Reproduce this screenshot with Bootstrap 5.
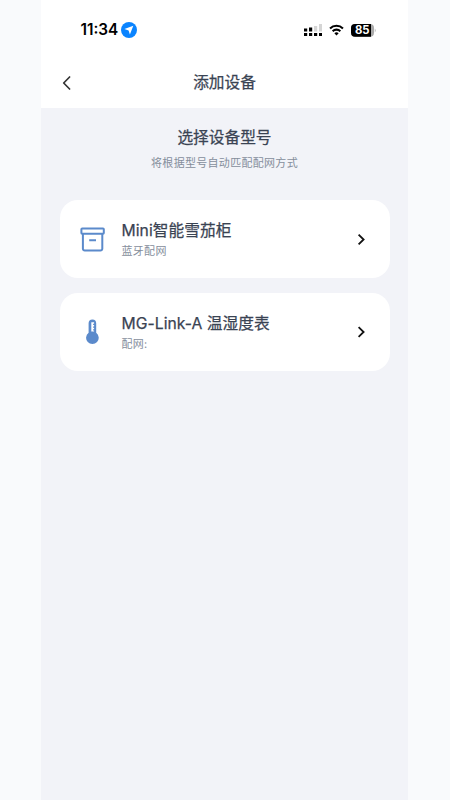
<!DOCTYPE html>
<html lang="zh-CN">
<head>
<meta charset="utf-8">
<meta name="viewport" content="width=device-width, initial-scale=1">
<title>添加设备</title>
<link href="https://cdn.jsdelivr.net/npm/bootstrap@5.3.0/dist/css/bootstrap.min.css" rel="stylesheet">
<style>
body { background: #f9fafc; font-family: Inter, "Noto Sans CJK SC", sans-serif; color: #3a4353; }
.phone { width: 367px; height: 800px; margin-left: 41px; background: #f2f3f8; }
.status { height: 60px; padding: 0 32px 0 39.5px; color: #000; }
.clock { font-size: 15.3px; font-weight: 600; line-height: 20px; }
.status-icons { gap: 7px; }
.titlebar { height: 48px; padding: 0 20px; }
.page-title, .intro h2, .device-name { font-size: 15.7px; font-weight: 400; line-height: 24px; -webkit-text-stroke: .25px currentColor; }
.page-title { margin: -2px 0 0; }
.back { margin-top: -3px; }
.side { width: 10px; }
.intro { padding-top: 18px; height: 92px; }
.intro h2 { margin: 0 0 4px; }
.muted { color: #858e9c; font-size: 11px; line-height: 18px; letter-spacing: .3px; }
.devices { padding: 0 18px 0 18.5px; gap: 15px; }
.device { height: 78px; border-radius: 18px; padding: 0 21px 0 19px; color: inherit; }
.device-name { line-height: 22px; letter-spacing: .05px; padding-top: 2px; }
.device .icon { width: 26px; margin-right: 17px; }
</style>
</head>
<body>
<main class="phone d-flex flex-column">
  <header class="bg-white">
    <div class="status d-flex align-items-center justify-content-between">
      <div class="d-flex align-items-center">
        <span class="clock">11:34</span>
        <svg style="margin-left:3px" width="16" height="16" viewBox="0 0 16 16"><circle cx="8" cy="8" r="8" fill="#0a84ff"/><path d="M12.3 3.7 8.9 12.6 7.6 8.4 3.4 7.1Z" fill="#fff"/></svg>
      </div>
      <div class="status-icons d-flex align-items-center">
        <svg width="18.5" height="12" viewBox="0 0 18.5 12">
          <path d="M0 4.5h3.2v3H0zM5 3.5h3.2v4H5z"/>
          <path d="M10 2h3.2v5.5H10zM15 0h3.2v7.5H15z" fill="#d5d5d5"/>
          <path d="M0 9h3.2v3H0zM5 9h3.2v3H5zM10 9h3.2v3H10zM15 9h3.2v3H15z"/>
        </svg>
        <svg width="15" height="12" viewBox="0 0 16 12" fill="none" stroke="#000" stroke-width="2.2"><path d="M1.1 4.4a9.8 9.8 0 0 1 13.8 0M3.9 7.3a5.8 5.8 0 0 1 8.2 0"/><path d="M8 11.8 5.7 9.5a3.2 3.2 0 0 1 4.6 0Z" fill="#000" stroke="none"/></svg>
        <svg width="25" height="13" viewBox="0 0 25 13"><rect width="23" height="12.8" rx="4" fill="#aaa"/><path d="M4 0H20V12.8H4a4 4 0 0 1-4-4V4a4 4 0 0 1 4-4Z"/><path d="M23.8 4.4q1.6 2 0 4Z" fill="#aaa"/><text x="11.3" y="10.4" text-anchor="middle" fill="#fff" font-size="11.3" font-weight="700">85</text></svg>
      </div>
    </div>
    <div class="titlebar d-flex align-items-center justify-content-between">
      <svg class="back" width="10" height="16" viewBox="0 0 10 16" fill="none" stroke="#333" stroke-width="1.7" stroke-linecap="round" stroke-linejoin="round"><path d="M8.6 2 2.7 8l5.9 6"/></svg>
      <h1 class="page-title">添加设备</h1>
      <span class="side"></span>
    </div>
  </header>
  <section class="intro text-center">
    <h2>选择设备型号</h2>
    <div class="muted">将根据型号自动匹配配网方式</div>
  </section>
  <section class="devices d-flex flex-column">
    <a class="device bg-white d-flex align-items-center text-decoration-none" href="#">
      <svg class="icon" height="26" viewBox="0 0 26 26" fill="none" stroke="#5b8acb" stroke-width="2" stroke-linejoin="round"><rect x="2.4" y="2.4" width="22.4" height="5.4" rx=".8"/><path d="M3.9 8v14.7a1.8 1.8 0 0 0 1.8 1.8h15.8a1.8 1.8 0 0 0 1.8-1.8V8M10.2 14.3h6.8"/></svg>
      <div class="flex-grow-1">
        <div class="device-name">Mini智能雪茄柜</div>
        <div class="muted">蓝牙配网</div>
      </div>
      <svg width="16" height="16" viewBox="0 0 16 16" fill="none" stroke="#111" stroke-width="1.8"><path d="m5.6 3.7 5 4.8-5 4.8"/></svg>
    </a>
    <a class="device bg-white d-flex align-items-center text-decoration-none" href="#">
      <svg class="icon" height="26" viewBox="0 0 26 26"><path d="M9.6 4.3a3.8 3.8 0 0 1 7.6 0v9.5a6.3 6.3 0 1 1-7.6 0Z" fill="#5b8acb"/><path d="M12.3 3.3h2.8v1.4h-1v1.2h1v1.6h-1v1.2h1v1.6h-1v1.2h1v.9h-2.8Z" fill="#fff"/></svg>
      <div class="flex-grow-1">
        <div class="device-name">MG-Link-A 温湿度表</div>
        <div class="muted">配网:</div>
      </div>
      <svg width="16" height="16" viewBox="0 0 16 16" fill="none" stroke="#111" stroke-width="1.8"><path d="m5.6 3.2 5 4.8-5 4.8"/></svg>
    </a>
  </section>
</main>
<script src="https://cdn.jsdelivr.net/npm/bootstrap@5.3.0/dist/js/bootstrap.bundle.min.js"></script>
</body>
</html>
